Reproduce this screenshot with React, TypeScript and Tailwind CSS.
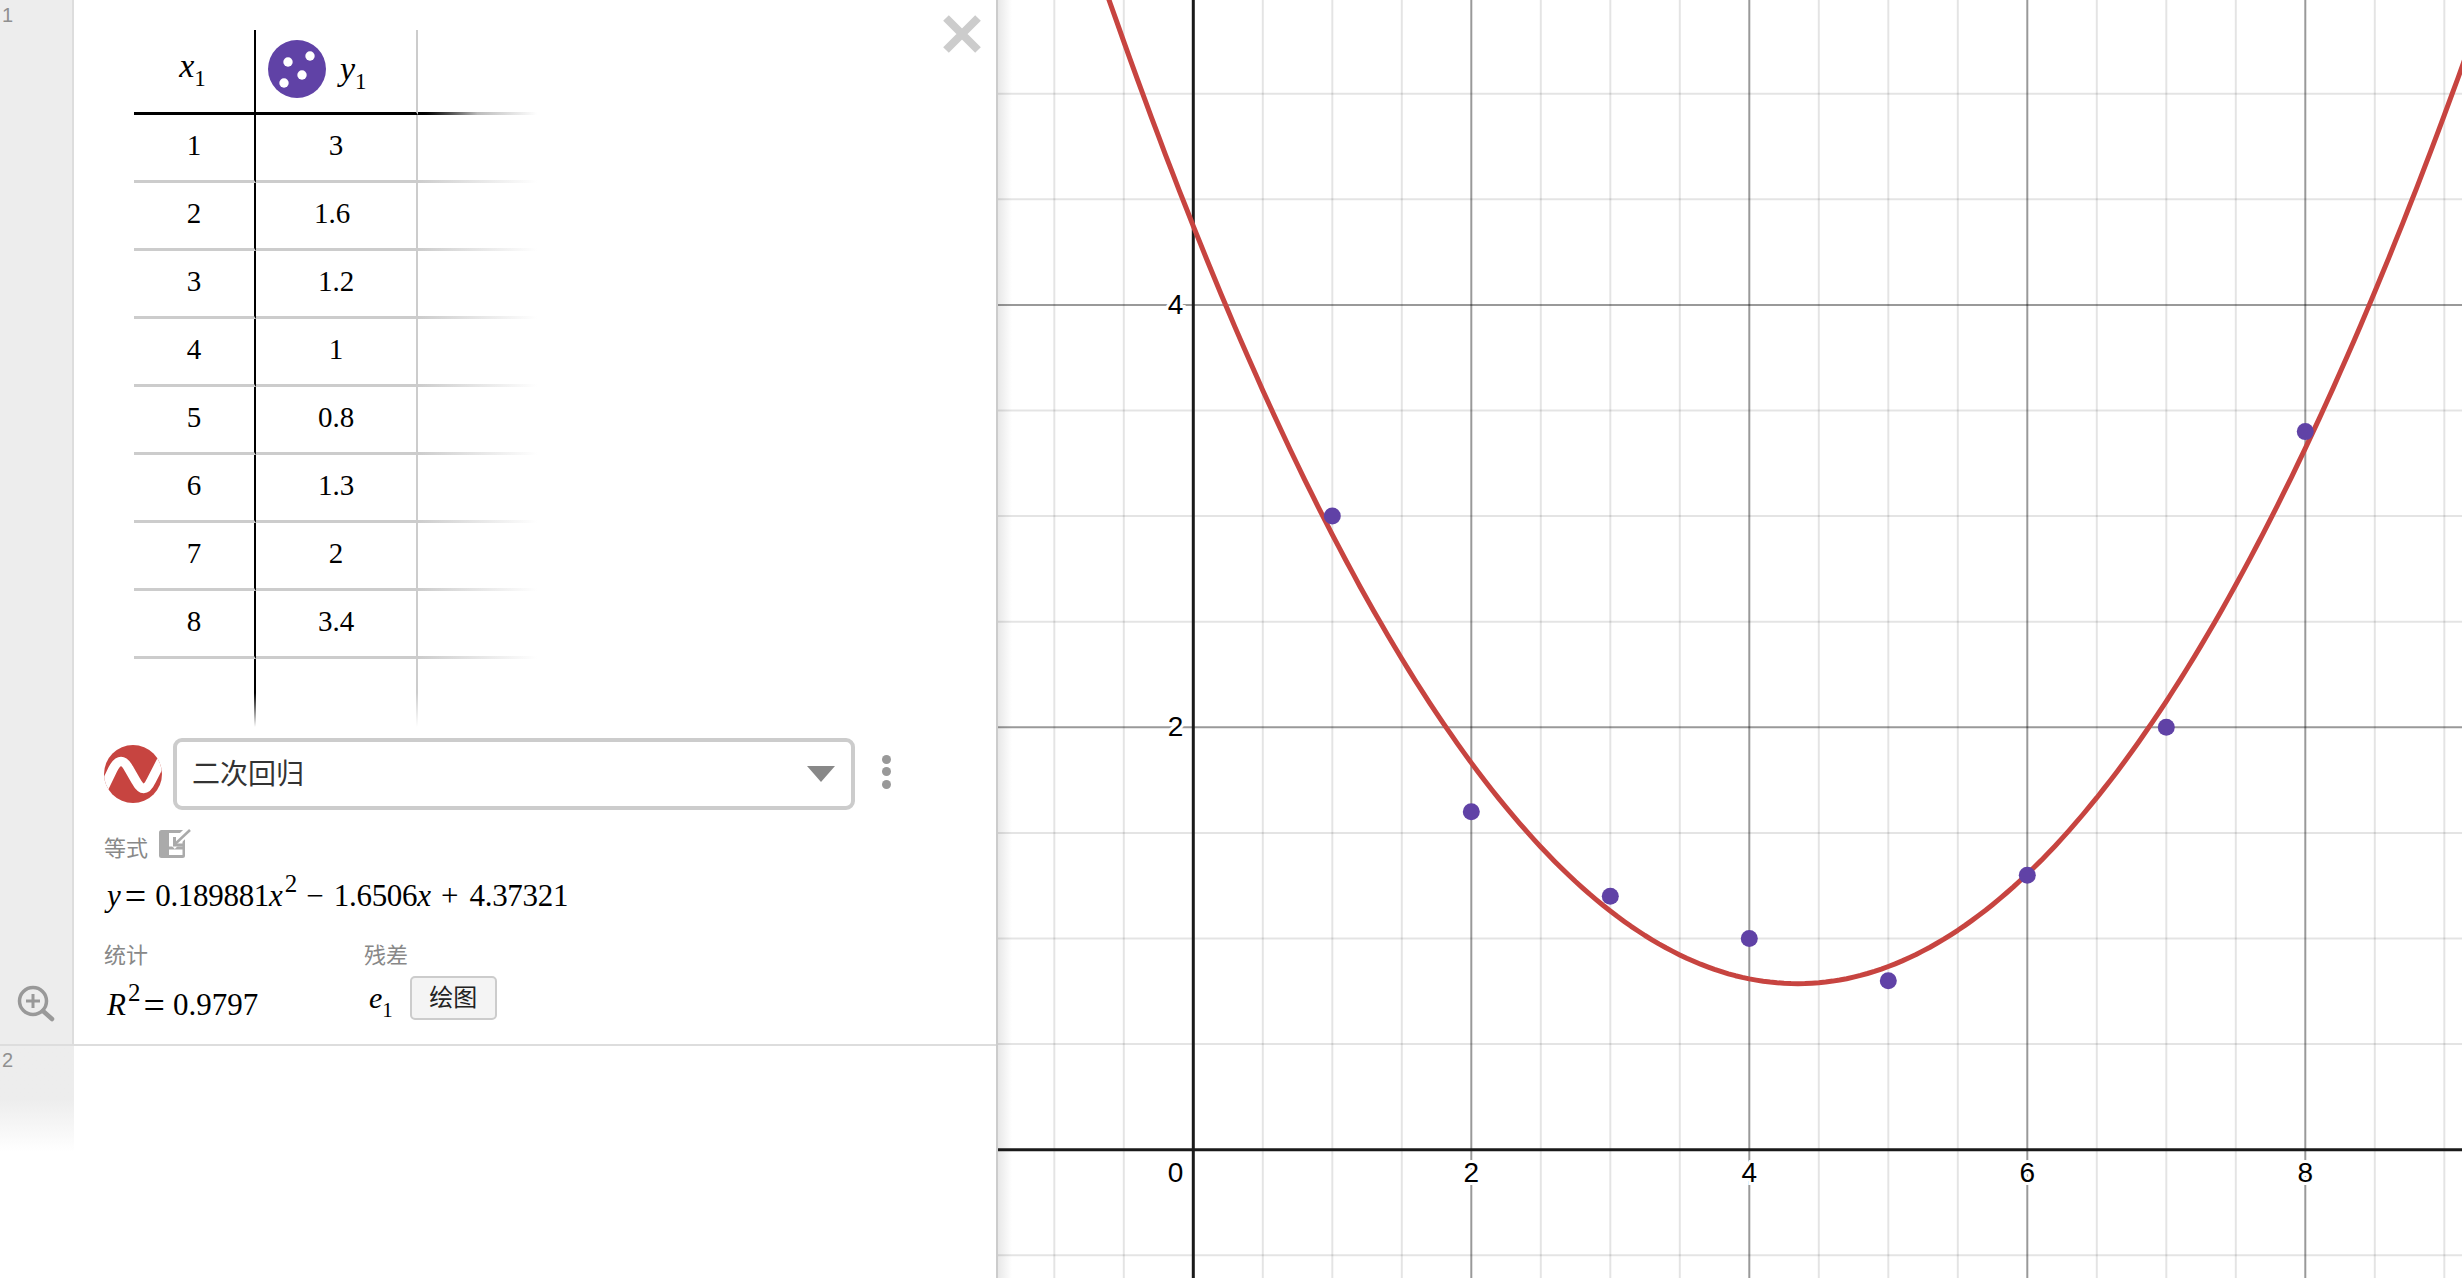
import React from "react";

const serif = "font-['Liberation_Serif','Noto_Sans_CJK_SC',serif]";
const rows: [string, string][] = [
  ["1", "3"], ["2", "1.6"], ["3", "1.2"], ["4", "1"],
  ["5", "0.8"], ["6", "1.3"], ["7", "2"], ["8", "3.4"],
];

const X0 = 195.3; // vertical axis inside the svg, which starts at x=998
const Y0 = 1149.7;
const UX = 139;
const UY = 211.2;
const px = (x: number) => X0 + x * UX;
const py = (y: number) => Y0 - y * UY;
const W = 1464;
const H = 1278;

function Graph() {
  const minorX: number[] = [];
  for (let i = -2; i <= 18; i++) minorX.push(i);
  const minorY: number[] = [];
  for (let i = -1; i <= 11; i++) minorY.push(i);
  const curve: string[] = [];
  for (let x = -1; x <= 9.2; x += 0.05) {
    const y = 0.189881 * x * x - 1.6506 * x + 4.37321;
    curve.push(`${px(x).toFixed(1)},${py(y).toFixed(1)}`);
  }
  const pts: [number, number][] = [[1, 3], [2, 1.6], [3, 1.2], [4, 1], [5, 0.8], [6, 1.3], [7, 2], [8, 3.4]];
  const lab = "font-['Liberation_Sans',sans-serif] text-[28px]";
  const minor = "rgba(0,0,0,0.105)";
  const major = "rgba(0,0,0,0.4)";
  return (
    <svg width={W} height={H} viewBox={`0 0 ${W} ${H}`} className="block relative">
      {minorX.map((i) => (i % 4 !== 0 ? <line key={"vx" + i} x1={X0 + (i * UX) / 2} x2={X0 + (i * UX) / 2} y1={0} y2={H} stroke={minor} strokeWidth={2} /> : null))}
      {minorY.map((i) => (i % 4 !== 0 ? <line key={"hy" + i} y1={Y0 - (i * UY) / 2} y2={Y0 - (i * UY) / 2} x1={0} x2={W} stroke={minor} strokeWidth={2} /> : null))}
      {[2, 4, 6, 8].map((v) => (
        <line key={"mx" + v} x1={px(v)} x2={px(v)} y1={0} y2={H} stroke={major} strokeWidth={2} />
      ))}
      {[2, 4].map((v) => (
        <line key={"my" + v} y1={py(v)} y2={py(v)} x1={0} x2={W} stroke={major} strokeWidth={2} />
      ))}
      <line x1={X0} x2={X0} y1={0} y2={H} stroke="#1a1a1a" strokeWidth={3} />
      <line y1={Y0} y2={Y0} x1={0} x2={W} stroke="#1a1a1a" strokeWidth={3} />
      <polyline points={curve.join(" ")} fill="none" stroke="#c74440" strokeWidth={5} strokeLinejoin="round" />
      {pts.map(([x, y]) => (
        <circle key={x} cx={px(x)} cy={py(y)} r={8.5} fill="#6042a6" />
      ))}
      {[2, 4, 6, 8].map((v) => (
        <text key={v} x={px(v)} y={1182} textAnchor="middle" className={lab} fill="#000" stroke="#fff" strokeWidth={6} paintOrder="stroke">{v}</text>
      ))}
      <text x={X0 - 10} y={1182} textAnchor="end" className={lab} fill="#000" stroke="#fff" strokeWidth={6} paintOrder="stroke">0</text>
      {[2, 4].map((v) => (
        <text key={v} x={X0 - 10} y={py(v) + 9} textAnchor="end" className={lab} fill="#000" stroke="#fff" strokeWidth={6} paintOrder="stroke">{v}</text>
      ))}
    </svg>
  );
}

function Sub({ v, s, main, sub }: { v: string; s: string; main: string; sub: string }) {
  return (
    <span className={`${serif} ${main} leading-none text-black whitespace-nowrap`}>
      <i>{v}</i>
      <span className={`${sub} relative top-[9px]`}>{s}</span>
    </span>
  );
}

function Sup({ children }: { children: React.ReactNode }) {
  return <span className="ml-[2px] text-[25px] relative top-[-14px]">{children}</span>;
}

function Eq({ className }: { className: string }) {
  return <span className={`${className} text-[38px] leading-[0] relative top-[3px]`}>=</span>;
}

function TableRow({ a, b }: { a: string; b: string }) {
  return (
    <div className="flex h-[68px]">
      <div className={`w-[122px] border-r-2 border-r-black border-b-[3px] border-b-[#ccc] flex items-center justify-center pb-[4px] ${serif} text-[29px] text-black`}>{a}</div>
      <div className={`w-[162px] border-r-2 border-r-[#ccc] border-b-[3px] border-b-[#ccc] flex items-center justify-center pb-[4px] ${b === "1.6" ? "pr-[8px]" : ""} ${serif} text-[29px] text-black`}>{b}</div>
      <div className="w-[119px] flex flex-col justify-end">
        <div className="h-[3px] bg-gradient-to-r from-[#ccc] to-transparent" />
      </div>
    </div>
  );
}

function Table() {
  return (
    <div className="ml-[60px] mt-[30px] w-[403px]">
      <div className="flex h-[85px]">
        <div className="w-[122px] border-r-2 border-r-black border-b-[3px] border-b-black flex items-center justify-center pb-[11px] pr-[3px]">
          <Sub v="x" s="1" main="text-[34px]" sub="text-[23px]" />
        </div>
        <div className="w-[162px] border-r-2 border-r-[#ccc] border-b-[3px] border-b-black flex items-center gap-[14px] pl-[12px] pb-[4px]">
          <svg width="58" height="58" viewBox="-29 -29 58 58" className="shrink-0">
            <circle r="29" fill="#6042a6" />
            <circle cx="-9" cy="-7" r="4.7" fill="#fff" />
            <circle cx="13" cy="-13" r="4.7" fill="#fff" />
            <circle cx="5" cy="6" r="4.7" fill="#fff" />
            <circle cx="-13" cy="14" r="4.7" fill="#fff" />
          </svg>
          <Sub v="y" s="1" main="text-[34px]" sub="text-[23px]" />
        </div>
        <div className="w-[119px] flex flex-col justify-end">
          <div className="h-[3px] bg-gradient-to-r from-black via-[#bbb] to-transparent" />
        </div>
      </div>
      {rows.map(([a, b]) => (
        <TableRow key={a} a={a} b={b} />
      ))}
      <div className="flex h-[68px]">
        <div className="w-[122px] flex justify-end">
          <div className="w-[2px] h-full bg-gradient-to-b from-black via-black to-transparent" />
        </div>
        <div className="w-[162px] flex justify-end">
          <div className="w-[2px] h-full bg-gradient-to-b from-[#ccc] via-[#ccc] to-transparent" />
        </div>
      </div>
    </div>
  );
}

function Wave() {
  return (
    <svg width="58" height="58" viewBox="-29 -29 58 58" className="shrink-0">
      <clipPath id="cw"><circle r="29" /></clipPath>
      <circle r="29" fill="#c74440" />
      <path d="M-34 24 L-20 -5 Q-12 -20 -4 -5 L3 7 Q11 22 18 7 L34 -24" fill="none" stroke="#fff" strokeWidth="9.5" clipPath="url(#cw)" />
    </svg>
  );
}

function Select() {
  return (
    <div className="flex items-center mt-[11px] ml-[29px]">
      <div className="ml-[1px] mb-[1px]"><Wave /></div>
      <div className="ml-[11px] w-[682px] h-[72px] rounded-[9px] border-[4px] border-[#ccc] flex items-center justify-between pl-[15px] pr-[16px]">
        <span className="pt-[2px] font-['Liberation_Sans','Noto_Sans_CJK_SC',sans-serif] text-[28px] text-[#333]">二次回归</span>
        <svg width="28" height="16" viewBox="0 0 28 16"><path d="M0 0H28L14 16Z" fill="#888" /></svg>
      </div>
      <div className="ml-[27px] mb-[5px] flex flex-col gap-[3.5px]">
        <span className="w-[9px] h-[9px] rounded-full bg-[#999]" />
        <span className="w-[9px] h-[9px] rounded-full bg-[#999]" />
        <span className="w-[9px] h-[9px] rounded-full bg-[#999]" />
      </div>
    </div>
  );
}

const caption = "font-['Liberation_Sans','Noto_Sans_CJK_SC',sans-serif] text-[22px] leading-none text-[#888]";

function EditIcon() {
  return (
    <svg width="32" height="30" viewBox="0 0 32 30" className="ml-[11px] shrink-0 relative top-[1px]">
      <rect x="0" y="1" width="26" height="28" rx="2.5" fill="#aaa" />
      <path d="M10 4H23.5V17.5H10Z" fill="#fff" />
      <path d="M10 20.5H23.5V26H10Z" fill="#fff" />
      <path d="M13 17L31 0" stroke="#fff" strokeWidth="8" />
      <path d="M15 16L31 1" stroke="#aaa" strokeWidth="2.5" />
      <path d="M15.5 8V16H24" fill="none" stroke="#aaa" strokeWidth="3" />
    </svg>
  );
}

function Equation() {
  return (
    <div className="ml-[30px] flex flex-col">
      <div className="flex items-end mt-[18px] h-[30px]">
        <span className={`${caption} relative top-[2px]`}>等式</span>
        <EditIcon />
      </div>
      <div className={`${serif} text-[31px] leading-none text-black mt-[22px] ml-[3px] h-[36px] whitespace-nowrap`}>
        <i>y</i>
        <Eq className="ml-[4px]" />
        <span className="ml-[9px] tracking-[-0.3px]">0.189881</span>
        <i>x</i>
        <Sup>2</Sup>
        <span className="ml-[9px]">−</span>
        <span className="ml-[10px] tracking-[-0.3px]">1.6506</span>
        <i>x</i>
        <span className="ml-[10px]">+</span>
        <span className="ml-[11px] tracking-[-0.3px]">4.37321</span>
      </div>
      <div className="flex mt-[29px]">
        <div className="w-[260px]">
          <div className={caption}>统计</div>
          <div className={`${serif} text-[31px] leading-none text-black mt-[22px] ml-[3px] whitespace-nowrap`}>
            <i>R</i>
            <Sup>2</Sup>
            <Eq className="ml-[3px]" />
            <span className="ml-[8px]">0.9797</span>
          </div>
        </div>
        <div>
          <div className={caption}>残差</div>
          <div className="flex items-center mt-[9px] ml-[5px]">
            <Sub v="e" s="1" main="text-[30px]" sub="text-[21px]" />
            <div className="ml-[17px] w-[87px] h-[44px] rounded-[5px] bg-[#f4f4f4] border-2 border-[#ccc] flex items-center justify-center font-['Liberation_Sans','Noto_Sans_CJK_SC',sans-serif] text-[24px] text-[#222]">绘图</div>
          </div>
        </div>
      </div>
    </div>
  );
}

function ZoomIcon() {
  return (
    <svg width="40" height="40" viewBox="0 0 40 40" className="ml-[16px] mb-[20px]">
      <circle cx="17" cy="17" r="13.5" fill="none" stroke="#999" strokeWidth="3.5" />
      <path d="M17 10V24M10 17H24" stroke="#999" strokeWidth="3" />
      <path d="M27 27L36 35" stroke="#999" strokeWidth="4.5" strokeLinecap="round" />
    </svg>
  );
}

export default function App() {
  return (
    <div className="flex w-[2462px] h-[1278px] overflow-hidden bg-white">
      <div className="w-[996px] shrink-0 flex flex-col">
        <div className="flex h-[1046px] border-b-2 border-b-[#ddd]">
          <div className="w-[74px] shrink-0 bg-[#ededed] border-r-2 border-r-[#ddd] flex flex-col justify-between">
            <span className="font-['Liberation_Sans',sans-serif] text-[20px] leading-none text-[#909090] pl-[2px] pt-[5px]">1</span>
            <ZoomIcon />
          </div>
          <div className="flex-1 relative">
            <Table />
            <Select />
            <Equation />
            <svg width="38" height="38" viewBox="0 0 38 38" className="absolute left-[869px] top-[15px]">
              <path d="M3 3L35 35M35 3L3 35" stroke="#ccc" strokeWidth="8" />
            </svg>
          </div>
        </div>
        <div className="flex flex-1">
          <div className="w-[74px] h-[106px] shrink-0 bg-gradient-to-b from-[#ededed] via-[#ededed] to-white">
            <span className="block font-['Liberation_Sans',sans-serif] text-[20px] leading-none text-[#909090] pl-[2px] pt-[4px]">2</span>
          </div>
        </div>
      </div>
      <div className="flex-1 relative overflow-hidden border-l-2 border-l-[#ccc]">
        <div className="absolute left-0 top-0 bottom-0 w-[14px] bg-gradient-to-r from-[#e8e8e8] to-transparent" />
        <Graph />
      </div>
    </div>
  );
}
